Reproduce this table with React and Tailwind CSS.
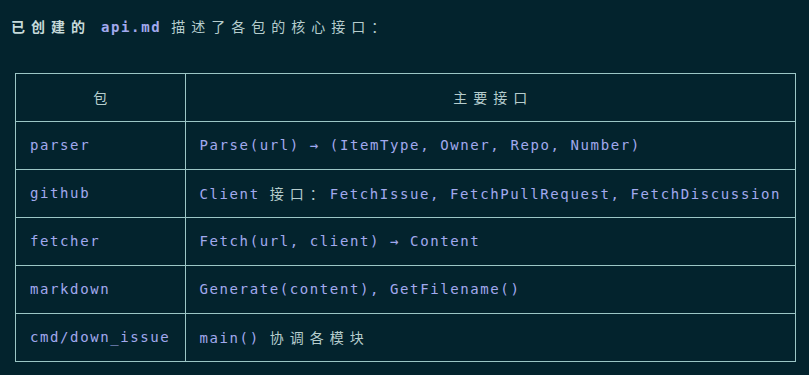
import React from "react";

const mono = "font-['DejaVu_Sans_Mono','Liberation_Mono',monospace]";

function C({ children, className = "" }) {
  return (
    <span
      className={`font-['Noto_Sans_CJK_SC',sans-serif] tracking-[6px] text-[#b6cdcd] ${className}`}
    >
      {children}
    </span>
  );
}

function P({ children }) {
  return <span className="text-[#a2a9ee]">{children}</span>;
}

const rows = [
  ["parser", <P>Parse(url) → (ItemType, Owner, Repo, Number)</P>],
  [
    "github",
    <>
      <P>Client </P>
      <C>接口：</C>
      <P>FetchIssue, FetchPullRequest, FetchDiscussion</P>
    </>,
  ],
  ["fetcher", <P>Fetch(url, client) → Content</P>],
  ["markdown", <P>Generate(content), GetFilename()</P>],
  [
    "cmd/down_issue",
    <>
      <P>main() </P>
      <C>协调各模块</C>
    </>,
  ],
];

export default function App() {
  return (
    <div
      className={`min-h-screen w-full bg-[#03232d] ${mono} text-[14px] tracking-[1.6px] text-[#b6cdcd]`}
    >
      <div className="pl-[11px] pt-[14px] leading-[24px] whitespace-pre">
        <C className="font-bold text-[#c6dada]">已创建的</C>
        <span> </span>
        <span className="font-bold text-[#a2a9ee]">api.md</span>
        <span> </span>
        <C>描述了各包的核心接口：</C>
      </div>
      <div className="pl-[15px] pt-[34px]">
        <table className="border-collapse w-[781px]">
          <thead>
            <tr className="h-[48px]">
              <th className="w-[170px] border border-[#9cc6c6] font-normal text-center pl-[6px]">
                <C>包</C>
              </th>
              <th className="border border-[#9cc6c6] font-normal text-center pl-[6px]">
                <C>主要接口</C>
              </th>
            </tr>
          </thead>
          <tbody>
            {rows.map(([a, b], i) => (
              <tr key={i} className="h-[48px]">
                <td className="border border-[#9cc6c6] px-[14px] text-left whitespace-pre">
                  <P>{a}</P>
                </td>
                <td className="border border-[#9cc6c6] px-[14px] text-left whitespace-pre">
                  {b}
                </td>
              </tr>
            ))}
          </tbody>
        </table>
      </div>
    </div>
  );
}
